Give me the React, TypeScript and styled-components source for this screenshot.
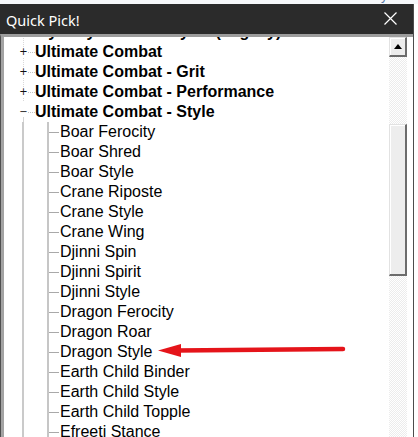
import React from "react"
import styled, { createGlobalStyle } from "styled-components"

const GlobalStyle = createGlobalStyle`
  html, body {
    margin: 0;
    padding: 0;
    background: #ffffff;
  }
  body {
    font-family: "Liberation Sans", Arial, sans-serif;
  }
`

const Screen = styled.div`
  position: relative;
  width: 418px;
  height: 437px;
  overflow: hidden;
  display: flex;
  flex-direction: column;
  background: #ffffff;
`
const BehindStrip = styled.div`
  height: 4px;
  flex: 0 0 4px;
  overflow: hidden;
  display: flex;
  justify-content: space-between;
  padding: 0 14px 0 4px;
  background: #f6f8fb;
  & > span {
    margin-top: -11px;
    font-size: 13px;
    line-height: 14px;
    color: #5a79a6;
  }
`
const Window = styled.div`
  width: 414px;
  flex: 1;
  display: flex;
  flex-direction: column;
  min-height: 0;
  border-right: 1px solid #4c4c4c;
  box-sizing: border-box;
`
const TitleBar = styled.div`
  height: 30px;
  flex: 0 0 30px;
  background: #2b2b2b;
  display: flex;
  align-items: center;
  justify-content: space-between;
  padding: 1px 16px 0 6px;
  box-sizing: border-box;
  color: #ffffff;
  font-family: "Noto Sans", "Liberation Sans", sans-serif;
  font-size: 14.5px;
`
const CloseIcon = styled.svg`
  width: 13px;
  height: 13px;
  margin-top: -3px;
`
const Body = styled.div`
  flex: 1;
  min-height: 0;
  display: flex;
  border-top: 3px solid #9c9c9c;
  border-left: 1px solid #4f4f4f;
  box-shadow: inset 3px 0 0 #a3a3a3;
  background: #ffffff;
  padding-right: 6px;
`
const TreePane = styled.div`
  flex: 1;
  min-width: 0;
  overflow: hidden;
  padding-left: 3px;
`
const TreeList = styled.ul`
  list-style: none;
  margin: -15px 0 0;
  padding: 0;
`
const RootRow = styled.li<{ $open?: boolean }>`
  height: 20px;
  display: flex;
  align-items: center;
  padding-left: 15px;
  font-size: 16px;
  font-weight: bold;
  line-height: 20px;
  color: #000000;
  white-space: nowrap;
  background-image: ${(p) =>
    p.$open
      ? "linear-gradient(#d4d4d4, #d4d4d4)"
      : "repeating-linear-gradient(to bottom, #d8d8d8 0 1px, transparent 1px 2px)"};
  background-repeat: no-repeat;
  background-size: 1px ${(p) => (p.$open ? "10px" : "100%")};
  background-position: 19px ${(p) => (p.$open ? "bottom" : "0")};
`
const Expander = styled.span`
  width: 9px;
  height: 20px;
  display: flex;
  align-items: center;
  justify-content: center;
  font-family: "DejaVu Sans", sans-serif;
  font-weight: normal;
  font-size: 10px;
  color: #111111;
  background: #ffffff;
  background-clip: content-box;
  padding: 5px 0;
  box-sizing: border-box;
`
const Connector = styled.span`
  width: 7px;
  border-top: 1px dotted #c4c4c4;
`
const ChildRow = styled.li`
  height: 20px;
  padding-left: 56px;
  font-size: 16px;
  line-height: 20px;
  color: #000000;
  white-space: nowrap;
  background-image:
    linear-gradient(#cacaca, #cacaca),
    linear-gradient(#c6c6c6, #c6c6c6),
    linear-gradient(#a9a9a9, #a9a9a9);
  background-repeat: no-repeat;
  background-size: 2px 100%, 2px 100%, 10px 1px;
  background-position: 18px 0, 43px 0, 45px 10px;
`
const Scrollbar = styled.div`
  width: 18px;
  flex: 0 0 18px;
  display: flex;
  flex-direction: column;
  background-color: #ffffff;
  background-image: conic-gradient(#ececec 25%, #ffffff 0 50%, #ececec 0 75%, #ffffff 0);
  background-size: 2px 2px;
`
const Bevel = styled.div<{ $size: number }>`
  flex: 0 0 ${(p) => p.$size}px;
  box-sizing: border-box;
  background: #ededed;
  border-top: 1px solid #e2e2e2;
  border-left: 1px solid #e2e2e2;
  border-right: 2px solid #6c6c6c;
  border-bottom: 2px solid #6c6c6c;
  box-shadow: inset 1px 1px 0 #ffffff;
  display: flex;
  align-items: center;
  justify-content: center;
`
const Gap = styled.div<{ $size: number }>`
  flex: 0 0 ${(p) => p.$size}px;
`
const UpTriangle = styled.span`
  width: 0;
  height: 0;
  border-left: 4px solid transparent;
  border-right: 4px solid transparent;
  border-bottom: 5px solid #000000;
  margin-top: -1px;
`
const Pointer = styled.svg`
  position: absolute;
  left: 155px;
  top: 340px;
  width: 195px;
  height: 20px;
`

const roots = ["Ultimate Combat", "Ultimate Combat - Grit", "Ultimate Combat - Performance"]

const styleMoves = [
  "Boar Ferocity",
  "Boar Shred",
  "Boar Style",
  "Crane Riposte",
  "Crane Style",
  "Crane Wing",
  "Djinni Spin",
  "Djinni Spirit",
  "Djinni Style",
  "Dragon Ferocity",
  "Dragon Roar",
  "Dragon Style",
  "Earth Child Binder",
  "Earth Child Style",
  "Earth Child Topple",
  "Efreeti Stance",
]

export default function App() {
  return (
    <Screen>
      <GlobalStyle />
      <BehindStrip>
        <span>Number</span>
        <span>Styles</span>
      </BehindStrip>
      <Window>
        <TitleBar>
          <span>Quick Pick!</span>
          <CloseIcon viewBox="0 0 13 13">
            <path d="M0.5 0.5 L12.5 12.5 M12.5 0.5 L0.5 12.5" stroke="#ffffff" strokeWidth="1.2" fill="none" />
          </CloseIcon>
        </TitleBar>
        <Body>
          <TreePane>
            <TreeList>
              <RootRow>
                <Expander>+</Expander>
                <Connector />
                Mystery Combat Styles (Legacy)
              </RootRow>
              {roots.map((r) => (
                <RootRow key={r}>
                  <Expander>+</Expander>
                  <Connector />
                  {r}
                </RootRow>
              ))}
              <RootRow $open>
                <Expander>−</Expander>
                <Connector />
                Ultimate Combat - Style
              </RootRow>
              {styleMoves.map((m) => (
                <ChildRow key={m}>{m}</ChildRow>
              ))}
            </TreeList>
          </TreePane>
          <Scrollbar>
            <Bevel $size={20}>
              <UpTriangle />
            </Bevel>
            <Gap $size={67} />
            <Bevel $size={152} />
          </Scrollbar>
        </Body>
      </Window>
      <Pointer viewBox="0 0 195 20">
        <line x1="22" y1="10.5" x2="188" y2="9" stroke="#e5141a" strokeWidth="4.5" strokeLinecap="round" />
        <polygon points="3,10.5 26,4 26,17" fill="#e5141a" />
      </Pointer>
    </Screen>
  )
}
